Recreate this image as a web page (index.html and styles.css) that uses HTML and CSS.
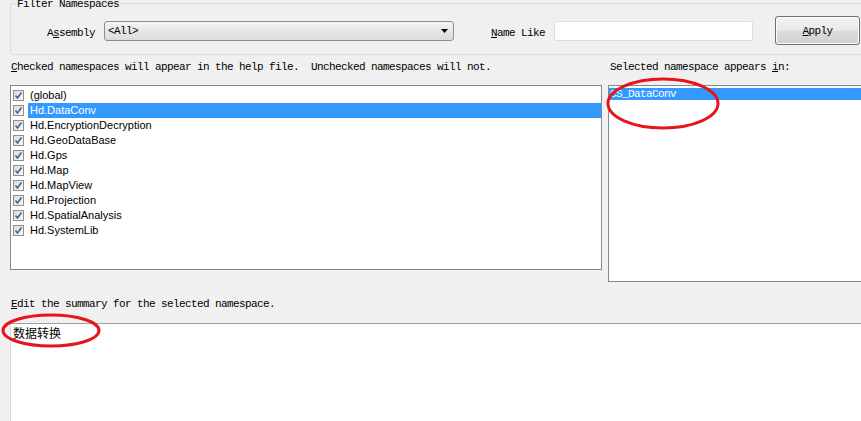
FILE: index.html
```html
<!DOCTYPE html>
<html>
<head>
<meta charset="utf-8">
<link rel="stylesheet" href="styles.css">
</head>
<body>
<div class="page">
  <div class="group">
    <span class="legend mono">Filter Namespaces</span>
    <div class="filter-row">
      <span class="lbl mono">A<u>s</u>sembly</span>
      <div class="combo">
        <span class="mono">&lt;All&gt;</span>
        <svg class="arrow" width="7" height="4" viewBox="0 0 7 4"><polygon points="0,0 7,0 3.5,4" fill="#000"/></svg>
      </div>
      <span class="lbl mono name-lbl"><u>N</u>ame Like</span>
      <div class="textbox"></div>
      <div class="btn mono"><u>A</u>pply</div>
    </div>
  </div>

  <div class="cols labels">
    <div class="mono lbl-left"><u>C</u>hecked namespaces will appear in the help file.  Unchecked namespaces will not.</div>
    <div class="mono lbl-right">Selected namespace appears <u>i</u>n:</div>
  </div>

  <div class="cols lists">
    <div class="list list-left">
      <div class="row"><span class="cb"></span><span class="txt">(global)</span></div>
      <div class="row sel"><span class="cb"></span><span class="txt">Hd.DataConv</span></div>
      <div class="row"><span class="cb"></span><span class="txt">Hd.EncryptionDecryption</span></div>
      <div class="row"><span class="cb"></span><span class="txt">Hd.GeoDataBase</span></div>
      <div class="row"><span class="cb"></span><span class="txt">Hd.Gps</span></div>
      <div class="row"><span class="cb"></span><span class="txt">Hd.Map</span></div>
      <div class="row"><span class="cb"></span><span class="txt">Hd.MapView</span></div>
      <div class="row"><span class="cb"></span><span class="txt">Hd.Projection</span></div>
      <div class="row"><span class="cb"></span><span class="txt">Hd.SpatialAnalysis</span></div>
      <div class="row"><span class="cb"></span><span class="txt">Hd.SystemLib</span></div>
    </div>
    <div class="list list-right">
      <div class="sel-item mono">CS_DataConv</div>
    </div>
  </div>

  <div class="mono edit-lbl"><u>E</u>dit the summary for the selected namespace.</div>
  <div class="summary">数据转换</div>

  <svg class="annot" width="861" height="421" viewBox="0 0 861 421">
    <ellipse cx="663" cy="100.5" rx="55" ry="24.5" fill="none" stroke="#e8141c" stroke-width="3"/>
    <ellipse cx="51" cy="327.5" rx="48" ry="15.5" fill="none" stroke="#e8141c" stroke-width="3"/>
  </svg>
</div>
</body>
</html>
```
FILE: styles.css
```css
* { box-sizing: border-box; }
html, body {
  margin: 0;
  padding: 0;
  background: #f0f0f0;
  width: 861px;
  height: 421px;
  overflow: hidden;
}
.page {
  position: relative;
  width: 880px;
  height: 421px;
  font-family: "Liberation Sans", Arial, sans-serif;
  color: #000;
}
.mono {
  font-family: "Liberation Mono", "Courier New", monospace;
  font-size: 11px;
  letter-spacing: -0.6px;
  line-height: 12px;
  white-space: pre;
}
u { text-decoration: underline; text-underline-offset: 1px; }

.group {
  position: relative;
  margin: 3px 0 0 10px;
  height: 52px;
  border: 1px solid #d5dfe5;
  border-radius: 3px;
}
.legend {
  position: absolute;
  top: -6px;
  left: 6px;
  background: #f0f0f0;
  padding: 0 1px 0 0;
}
.filter-row {
  display: flex;
  align-items: center;
  margin-top: 12px;
  padding-left: 36px;
  height: 29px;
}
.lbl { padding-top: 4px; }
.combo {
  margin-left: 9px;
  width: 350px;
  height: 20px;
  border: 1px solid #8e8f8f;
  border-radius: 3px;
  background: linear-gradient(#f5f5f5, #e6e6e6 50%, #dcdcdc);
  display: flex;
  align-items: center;
  justify-content: space-between;
  padding: 0 5px 0 3px;
}
.arrow { display: block; }
.name-lbl { margin-left: 37px; }
.textbox {
  margin-left: 9px;
  width: 199px;
  height: 20px;
  background: #fff;
  border: 1px solid #dadde3;
  border-radius: 2px;
}
.btn {
  margin-left: 22px;
  width: 85px;
  height: 29px;
  border: 1px solid #707070;
  border-radius: 3px;
  background: linear-gradient(#f2f2f2, #ebebeb 48%, #dddddd 52%, #cfcfcf);
  display: flex;
  align-items: center;
  justify-content: center;
  box-shadow: inset 0 0 0 1px #fcfcfc;
}

.cols {
  display: grid;
  grid-template-columns: 592px 262px;
  column-gap: 6px;
  margin-left: 10px;
}
.labels { margin-top: 6px; }
.lbl-left { padding-left: 1px; }
.lbl-right { padding-left: 2px; }
.lists { margin-top: 12px; align-items: start; }

.list {
  background: #fff;
  border: 1px solid #828790;
}
.list-left { height: 185px; padding-top: 2px; }
.list-right { height: 197px; padding-top: 2px; }

.row {
  display: flex;
  align-items: center;
  height: 15px;
  font-size: 11px;
}
.cb {
  width: 11px;
  height: 11px;
  margin-left: 2px;
  margin-right: 4px;
  border: 1px solid #8e8f8f;
  background:
    url("data:image/svg+xml;utf8,<svg xmlns='http://www.w3.org/2000/svg' width='9' height='9' viewBox='0 0 9 9'><polyline points='1.5,4.5 3.5,7 7.5,1.5' fill='none' stroke='%234a5f97' stroke-width='1.6'/></svg>") center/9px 9px no-repeat,
    linear-gradient(135deg, #dcdcdc, #f8f8f8);
  flex: none;
}
.txt {
  flex: 1;
  height: 15px;
  line-height: 15px;
  padding-left: 2px;
  white-space: nowrap;
}
.row.sel .txt { background: #3399ff; color: #fff; }

.sel-item {
  background: #3399ff;
  color: #fff;
  height: 12px;
  padding-left: 1px;
}

.edit-lbl { margin-top: 16px; padding-left: 11px; }
.summary {
  margin: 13px 0 0 10px;
  height: 110px;
  background: #fff;
  border-top: 1px solid #a0a0a0;
  border-left: 1px solid #d5dbe3;
  padding: 2px 0 0 2px;
  font-family: "Noto Sans CJK SC", sans-serif;
  font-size: 12px;
  line-height: 13px;
}

.annot {
  position: absolute;
  left: 0;
  top: 0;
  pointer-events: none;
}
```
